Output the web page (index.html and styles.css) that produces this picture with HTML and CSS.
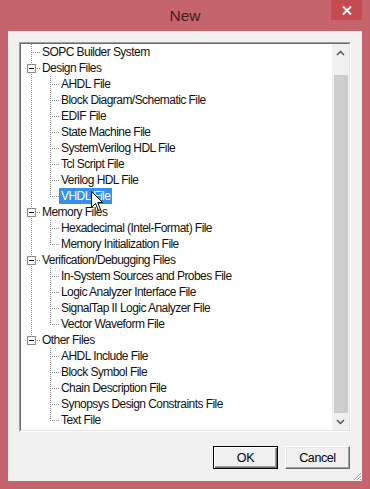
FILE: index.html
```html
<!DOCTYPE html>
<html>
<head>
<meta charset="utf-8">
<title>New</title>
<link rel="stylesheet" href="styles.css">
</head>
<body>
<div class="window">
  <div class="titlebar">
    <span class="spacer"></span>
    <span class="title">New</span>
    <span class="close"><svg width="10" height="9" viewBox="0 0 10 9"><path d="M1 0.5 L9 8.5 M9 0.5 L1 8.5" stroke="#fff" stroke-width="2"/></svg></span>
  </div>
  <div class="client">
    <div class="treebox">
      <div class="treeinner">
        <div class="tree">
          <div class="row"><span class="cell tee"></span><span class="label">SOPC Builder System</span></div>
          <div class="row"><span class="cell tee"><span class="box"></span></span><span class="label">Design Files</span></div>
          <div class="row"><span class="cell pipe"></span><span class="cell tee"></span><span class="label">AHDL File</span></div>
          <div class="row"><span class="cell pipe"></span><span class="cell tee"></span><span class="label">Block Diagram/Schematic File</span></div>
          <div class="row"><span class="cell pipe"></span><span class="cell tee"></span><span class="label">EDIF File</span></div>
          <div class="row"><span class="cell pipe"></span><span class="cell tee"></span><span class="label">State Machine File</span></div>
          <div class="row"><span class="cell pipe"></span><span class="cell tee"></span><span class="label">SystemVerilog HDL File</span></div>
          <div class="row"><span class="cell pipe"></span><span class="cell tee"></span><span class="label">Tcl Script File</span></div>
          <div class="row"><span class="cell pipe"></span><span class="cell tee"></span><span class="label">Verilog HDL File</span></div>
          <div class="row"><span class="cell pipe"></span><span class="cell ell"></span><span class="label selected">VHDL File</span></div>
          <div class="row"><span class="cell tee"><span class="box"></span></span><span class="label">Memory Files</span></div>
          <div class="row"><span class="cell pipe"></span><span class="cell tee"></span><span class="label">Hexadecimal (Intel-Format) File</span></div>
          <div class="row"><span class="cell pipe"></span><span class="cell ell"></span><span class="label">Memory Initialization File</span></div>
          <div class="row"><span class="cell tee"><span class="box"></span></span><span class="label">Verification/Debugging Files</span></div>
          <div class="row"><span class="cell pipe"></span><span class="cell tee"></span><span class="label">In-System Sources and Probes File</span></div>
          <div class="row"><span class="cell pipe"></span><span class="cell tee"></span><span class="label">Logic Analyzer Interface File</span></div>
          <div class="row"><span class="cell pipe"></span><span class="cell tee"></span><span class="label">SignalTap II Logic Analyzer File</span></div>
          <div class="row"><span class="cell pipe"></span><span class="cell ell"></span><span class="label">Vector Waveform File</span></div>
          <div class="row"><span class="cell ell"><span class="box"></span></span><span class="label">Other Files</span></div>
          <div class="row"><span class="cell"></span><span class="cell tee"></span><span class="label">AHDL Include File</span></div>
          <div class="row"><span class="cell"></span><span class="cell tee"></span><span class="label">Block Symbol File</span></div>
          <div class="row"><span class="cell"></span><span class="cell tee"></span><span class="label">Chain Description File</span></div>
          <div class="row"><span class="cell"></span><span class="cell tee"></span><span class="label">Synopsys Design Constraints File</span></div>
          <div class="row"><span class="cell"></span><span class="cell ell"></span><span class="label">Text File</span></div>
        </div>
        <div class="scrollbar">
          <div class="sbtn"><svg width="9" height="6" viewBox="0 0 9 6"><path d="M1 5 L4.5 1.5 L8 5" fill="none" stroke="#505050" stroke-width="1.5"/></svg></div>
          <div class="track"><div class="thumb"></div></div>
          <div class="sbtn"><svg width="9" height="6" viewBox="0 0 9 6"><path d="M1 1 L4.5 4.5 L8 1" fill="none" stroke="#505050" stroke-width="1.5"/></svg></div>
        </div>
      </div>
      <svg class="cursor" width="13" height="21" viewBox="0 0 13 21"><path d="M0.5 0.5 L0.5 16.5 L4.5 12.5 L7.5 19.5 L9.5 18.5 L6.8 11.5 L11.5 11.5 Z" fill="#fff" stroke="#000" stroke-width="1"/></svg>
    </div>
    <div class="buttons">
      <button class="btn default">OK</button>
      <button class="btn">Cancel</button>
    </div>
    <svg class="grip" width="10" height="10" viewBox="0 0 10 10"><path d="M9 2 L2 9 M9 5 L5 9 M9 8 L8 9" stroke="#a0a0a0" stroke-width="1"/></svg>
  </div>
</div>
</body>
</html>
```
FILE: styles.css
```css
html, body {
  margin: 0;
  padding: 0;
}
body {
  width: 370px;
  height: 489px;
  overflow: hidden;
  background: #c5646d;
}
.window {
  width: 370px;
  height: 489px;
  box-sizing: border-box;
  padding: 0 8px 8px 8px;
  background: #c5646d;
  display: flex;
  flex-direction: column;
}
.titlebar {
  height: 31px;
  flex: none;
  display: grid;
  grid-template-columns: 1fr auto 1fr;
}
.title {
  font-family: "Liberation Sans", Arial, sans-serif;
  font-size: 15.5px;
  color: #4b1a20;
  line-height: 31px;
}
.close {
  justify-self: end;
  align-self: start;
  width: 31px;
  height: 20px;
  background: #c64b50;
  display: flex;
  align-items: center;
  justify-content: center;
  padding-top: 1px;
  box-sizing: border-box;
}
.client {
  flex: 1;
  position: relative;
  background: #f0f0f0;
  padding: 11px 11px 0 11px;
  display: flex;
  flex-direction: column;
}
.treebox {
  position: relative;
  width: 332px;
  height: 390px;
  box-sizing: border-box;
  border: 1px solid;
  border-color: #a0a0a0 #ffffff #ffffff #a0a0a0;
}
.treeinner {
  height: 100%;
  box-sizing: border-box;
  border: 1px solid;
  border-color: #696969 #e3e3e3 #e3e3e3 #696969;
  background: #ffffff;
  display: flex;
}
.tree {
  flex: 1;
  font-family: "Liberation Sans", Arial, sans-serif;
  font-size: 12px;
  letter-spacing: -0.55px;
  color: #111;
}
.row {
  display: flex;
  height: 16px;
}
.cell {
  width: 19px;
  height: 16px;
  flex: none;
  display: flex;
  align-items: center;
}
.pipe {
  background-image: repeating-linear-gradient(to bottom, #8a8a8a 0 1px, transparent 1px 2px);
  background-size: 1px 16px;
  background-position: 10px 0;
  background-repeat: no-repeat;
}
.tee {
  background-image:
    repeating-linear-gradient(to bottom, #8a8a8a 0 1px, transparent 1px 2px),
    repeating-linear-gradient(to right, #8a8a8a 0 1px, transparent 1px 2px);
  background-size: 1px 16px, 9px 1px;
  background-position: 10px 0, 10px 8px;
  background-repeat: no-repeat;
}
.ell {
  background-image:
    repeating-linear-gradient(to bottom, #8a8a8a 0 1px, transparent 1px 2px),
    repeating-linear-gradient(to right, #8a8a8a 0 1px, transparent 1px 2px);
  background-size: 1px 9px, 9px 1px;
  background-position: 10px 0, 10px 8px;
  background-repeat: no-repeat;
}
.box {
  width: 9px;
  height: 9px;
  box-sizing: border-box;
  margin-left: 6px;
  border: 1px solid #8a8a8a;
  background: #fff linear-gradient(#000, #000) no-repeat 1px 3px / 5px 1px;
}
.label {
  height: 16px;
  line-height: 16px;
  padding: 0 2px;
  white-space: nowrap;
}
.selected {
  background: #3591ec;
  color: #fff;
}
.scrollbar {
  width: 17px;
  flex: none;
  background: #f0f0f0;
  display: flex;
  flex-direction: column;
}
.sbtn {
  height: 17px;
  flex: none;
  display: flex;
  align-items: center;
  justify-content: center;
}
.track {
  flex: 1;
  padding: 14px 1px 0 2px;
  display: flex;
  flex-direction: column;
}
.thumb {
  flex: 1;
  background: #cdcdcd;
}
.cursor {
  position: absolute;
  left: 71px;
  top: 148px;
}
.buttons {
  margin-top: 14px;
  display: flex;
  justify-content: flex-end;
  gap: 7px;
  padding-right: 1px;
}
.btn {
  width: 65px;
  height: 23px;
  box-sizing: border-box;
  margin: 0;
  padding: 0;
  background: #f0f0f0;
  font-family: "Liberation Sans", Arial, sans-serif;
  font-size: 12.5px;
  letter-spacing: -0.4px;
  color: #000;
  border: 1px solid;
  border-color: #ffffff #696969 #696969 #ffffff;
  box-shadow: inset -1px -1px 0 #a0a0a0, inset 1px 1px 0 #e3e3e3;
}
.btn.default {
  border-color: #000;
  box-shadow: inset 1px 1px 0 #ffffff, inset -1px -1px 0 #696969, inset -2px -2px 0 #a0a0a0;
}
.grip {
  position: absolute;
  right: 0;
  bottom: 0;
}
```
